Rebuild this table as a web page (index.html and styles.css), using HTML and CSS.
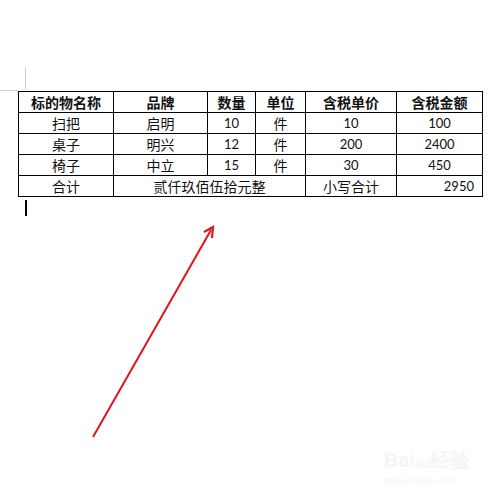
FILE: index.html
```html
<!DOCTYPE html>
<html lang="zh">
<head>
<meta charset="utf-8">
<link rel="stylesheet" href="styles.css">
</head>
<body>
<div class="page">
  <div class="mark"><div class="mark-h"></div><div class="mark-v"></div></div>
  <table class="tbl">
    <colgroup>
      <col style="width:95px"><col style="width:94px"><col style="width:48px"><col style="width:50px"><col style="width:91px"><col style="width:86px">
    </colgroup>
    <tr class="head"><td>标的物名称</td><td>品牌</td><td>数量</td><td>单位</td><td>含税单价</td><td>含税金额</td></tr>
    <tr><td>扫把</td><td>启明</td><td class="num">10</td><td>件</td><td class="num">10</td><td class="num">100</td></tr>
    <tr><td>桌子</td><td>明兴</td><td class="num">12</td><td>件</td><td class="num">200</td><td class="num">2400</td></tr>
    <tr><td>椅子</td><td>中立</td><td class="num">15</td><td>件</td><td class="num">30</td><td class="num">450</td></tr>
    <tr><td>合计</td><td colspan="3">贰仟玖佰伍拾元整</td><td>小写合计</td><td class="num right">2950</td></tr>
  </table>
  <div class="cursor"></div>
</div>
<svg class="arrow" width="500" height="500" viewBox="0 0 500 500">
  <line x1="93" y1="437" x2="211" y2="230" stroke="#e0141b" stroke-width="2"/>
  <path d="M204 232 L213 227 L212 238" fill="none" stroke="#e0141b" stroke-width="2.2" stroke-linejoin="miter"/>
</svg>
<div class="wm">
  <div class="wm-logo">Bai<span class="wm-du">du</span>经验</div>
  <div class="wm-url">jingyan.baidu.com</div>
</div>
</body>
</html>
```
FILE: styles.css
```css
html, body {
  margin: 0;
  padding: 0;
  background: #fff;
}
.page {
  width: 500px;
  height: 500px;
  padding-top: 67px;
  box-sizing: border-box;
}
.mark {
  display: flex;
  height: 24px;
}
.mark-h {
  width: 18px;
  height: 1px;
  align-self: flex-end;
  background: #cfcfcf;
}
.mark-v {
  width: 7px;
  border-right: 1px solid #cfcfcf;
  height: 23px;
}
.tbl {
  margin-left: 18px;
  border-collapse: collapse;
  table-layout: fixed;
  width: 464px;
  font-family: "Noto Sans CJK SC", sans-serif;
  font-size: 14px;
  color: #111;
}
.tbl td {
  border: 1px solid #000;
  height: 20px;
  padding: 0;
  text-align: center;
  vertical-align: middle;
  line-height: 18px;
  white-space: nowrap;
  overflow: hidden;
}
.tbl .head td {
  font-weight: 700;
}
.tbl td.num {
  font-family: Lato, "Liberation Sans", sans-serif;
  font-size: 13px;
}
.tbl td.right {
  text-align: right;
  padding-right: 8px;
}
.cursor {
  margin-left: 25px;
  margin-top: 3px;
  width: 2px;
  height: 16px;
  background: #000;
}
.arrow {
  position: absolute;
  left: 0;
  top: 0;
  pointer-events: none;
}
.wm {
  position: absolute;
  left: 384px;
  top: 448px;
  color: #f5f5f5;
  font-family: "Liberation Sans", sans-serif;
}
.wm-logo {
  font-size: 20px;
  font-weight: 700;
  line-height: 24px;
}
.wm-du {
  font-size: 12px;
}
.wm-url {
  font-size: 9px;
  line-height: 12px;
}
```
